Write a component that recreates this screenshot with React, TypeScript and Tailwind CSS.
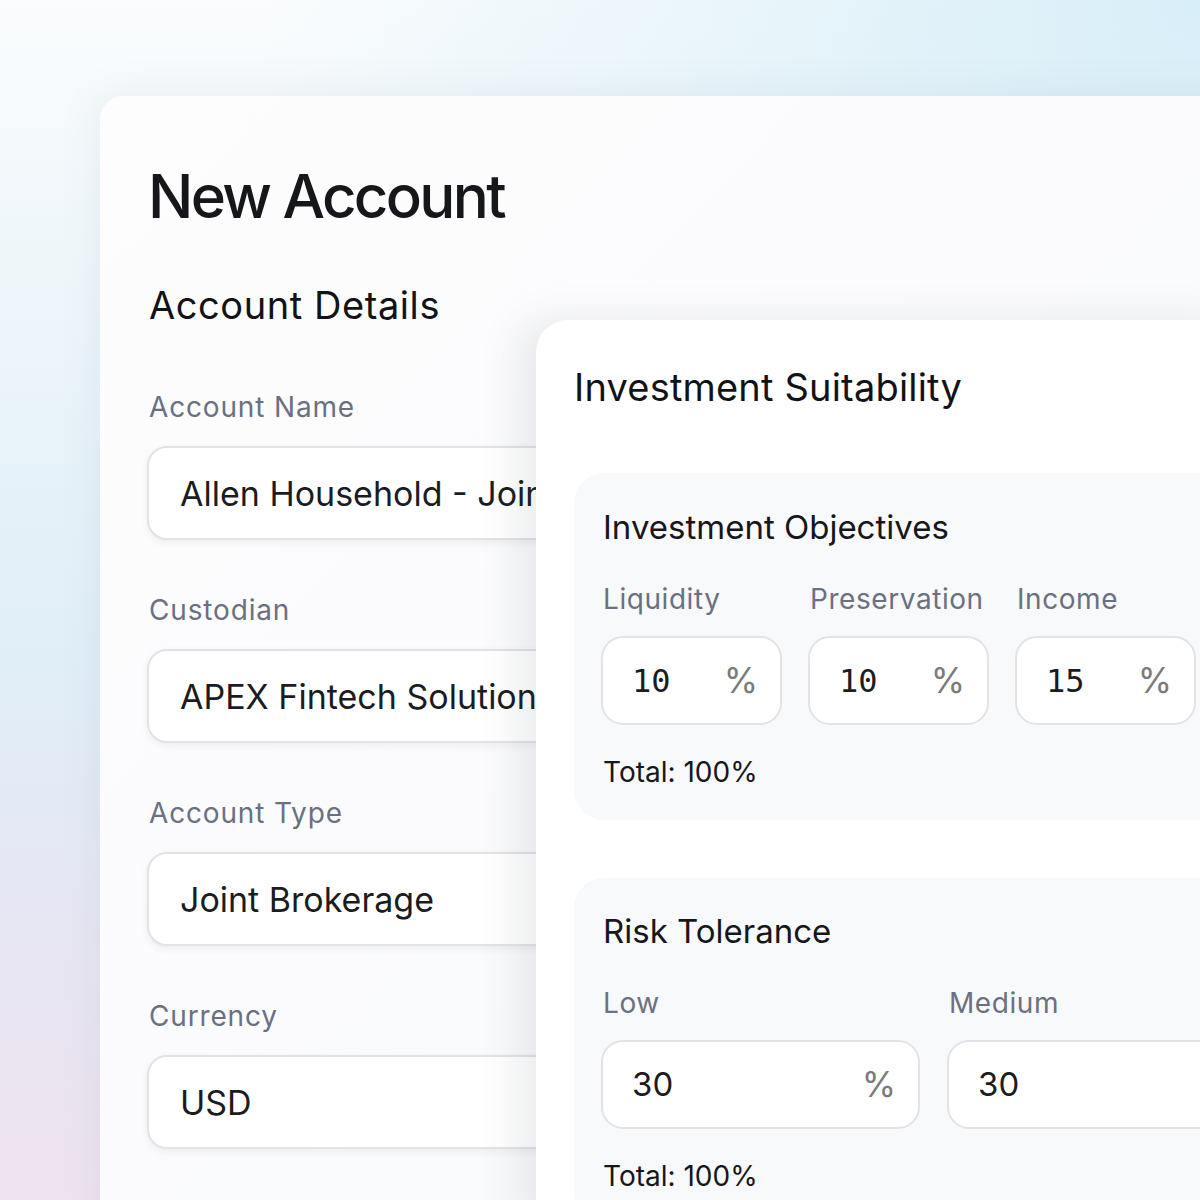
import React from 'react';

const leftFields = [
  { label: 'Account Name', value: 'Allen Household - Joint Account' },
  { label: 'Custodian', value: 'APEX Fintech Solutions' },
  { label: 'Account Type', value: 'Joint Brokerage' },
  { label: 'Currency', value: 'USD' },
  { label: 'Advisor', value: 'Sarah Mitchell' },
];

const objectives = [
  { label: 'Liquidity', value: '10' },
  { label: 'Preservation', value: '10' },
  { label: 'Income', value: '15' },
  { label: 'Growth', value: '40' },
];

const risks = [
  { label: 'Low', value: '30' },
  { label: 'Medium', value: '30' },
  { label: 'High', value: '40' },
];

const PercentInput: React.FC<{ value: string; mono?: boolean; width: string }> = ({ value, mono, width }) => (
  <div
    className={`${width} h-[89px] shrink-0 flex items-center justify-between rounded-[22px] border-2 border-[#e2e3e6] bg-white pl-[29px] pr-[22px]`}
  >
    <span
      className={
        mono
          ? "font-['DejaVu_Sans_Mono',monospace] text-[32px] text-[#1c1c1e]"
          : "text-[33px] text-[#1c1c1e]"
      }
    >
      {value}
    </span>
    <span className="text-[35px] font-normal text-[#7b7b7b]">%</span>
  </div>
);

const App: React.FC = () => {
  return (
    <div className="relative h-[1200px] w-[1200px] overflow-hidden font-['Inter',sans-serif] bg-[radial-gradient(ellipse_at_100%_0%,#d8eef8_0%,rgba(216,238,248,0)_55%),linear-gradient(180deg,#fafcfd_0%,#e8f3f9_35%,#e0eef8_55%,#e7e6f3_78%,#eee3ef_100%)]">
      {/* Main card */}
      <div className="ml-[100px] mt-[96px] h-[1200px] w-[1200px] rounded-tl-[24px] bg-[linear-gradient(135deg,#fdfdfe_0%,#f8f9fb_100%)] pl-[47px] pt-[70px] shadow-[0_0_40px_rgba(120,140,160,0.12)]">
        <h1 className="text-[60px] leading-[60px] font-medium tracking-[-0.045em] text-[#16171a] pl-[1px]">New Account</h1>
        <h2 className="mt-[57px] text-[38px] leading-[44px] font-normal tracking-[0.015em] text-[#121316] pl-[2px]">Account Details</h2>

        <div className="mt-[63px] flex flex-col gap-[53px]">
          {leftFields.map((f) => (
            <div key={f.label} className="flex flex-col">
              <label className="pl-[2px] text-[28px] leading-[34px] tracking-[0.03em] text-[#6b7080]">{f.label}</label>
              <div className="mt-[22px] flex h-[94px] w-[600px] items-center rounded-[20px] border-2 border-[#e2e3e6] bg-white pl-[31px] shadow-[0_3px_8px_rgba(0,0,0,0.06)]">
                <span className="whitespace-nowrap text-[34px] text-[#1b1c1f]">{f.value}</span>
              </div>
            </div>
          ))}
        </div>
      </div>

      {/* Overlay card */}
      <div className="absolute left-[536px] top-[320px] h-[900px] w-[700px] rounded-tl-[32px] bg-white pl-[38px] pt-[45px] shadow-[-18px_0_40px_rgba(60,70,90,0.10)]">
        <h2 className="text-[38px] leading-[44px] font-normal tracking-[0.005em] text-[#121316]">Investment Suitability</h2>

        <div className="mt-[64px] rounded-l-[30px] bg-[#f8f9fb] pl-[27px] pt-[34px] pb-[32px]">
          <h3 className="text-[33px] leading-[40px] font-normal text-[#16171a] pl-[2px]">Investment Objectives</h3>
          <div className="mt-[35px] flex gap-[26px]">
            {objectives.map((o) => (
              <div key={o.label} className="flex flex-col">
                <span className="pl-[2px] text-[28px] leading-[34px] tracking-[0.02em] text-[#6b7080]">{o.label}</span>
                <div className="mt-[20px]">
                  <PercentInput value={o.value} mono width="w-[181px]" />
                </div>
              </div>
            ))}
          </div>
          <p className="mt-[31px] pl-[2px] text-[28px] leading-[32px] font-normal text-[#16171a]">Total: 100%</p>
        </div>

        <div className="mt-[58px] rounded-l-[30px] bg-[#f8f9fb] pl-[27px] pt-[33px] pb-[32px]">
          <h3 className="text-[33px] leading-[40px] font-normal text-[#16171a] pl-[2px]">Risk Tolerance</h3>
          <div className="mt-[35px] flex gap-[27px]">
            {risks.map((r) => (
              <div key={r.label} className="flex flex-col">
                <span className="pl-[2px] text-[28px] leading-[34px] tracking-[0.02em] text-[#6b7080]">{r.label}</span>
                <div className="mt-[20px]">
                  <PercentInput value={r.value} width="w-[319px]" />
                </div>
              </div>
            ))}
          </div>
          <p className="mt-[31px] pl-[2px] text-[28px] leading-[32px] font-normal text-[#16171a]">Total: 100%</p>
        </div>
      </div>
    </div>
  );
};

export default App;
